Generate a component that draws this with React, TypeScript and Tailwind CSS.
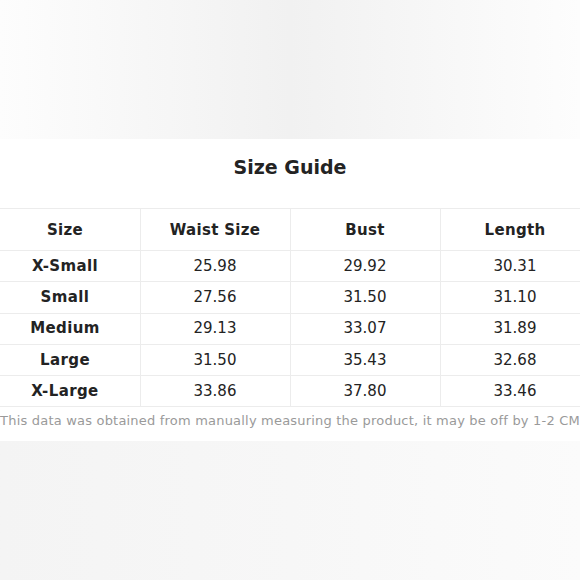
import React from "react"

const rows = [
  ["X-Small", "25.98", "29.92", "30.31"],
  ["Small", "27.56", "31.50", "31.10"],
  ["Medium", "29.13", "33.07", "31.89"],
  ["Large", "31.50", "35.43", "32.68"],
  ["X-Large", "33.86", "37.80", "33.46"],
]

const headers = ["Size", "Waist Size", "Bust", "Length"]

const App = () => {
  return (
    <div className="w-[580px] h-[580px] overflow-hidden flex flex-col font-['DejaVu_Sans',sans-serif] text-[#232323]">
      <div className="h-[139px] bg-linear-to-r from-[#fdfdfd] via-[#f1f1f1] to-[#fdfdfd]"></div>
      <div className="h-[302px] bg-white flex flex-col items-center">
        <h1 className="pt-4 text-[19px] leading-6 font-bold">Size Guide</h1>
        <table className="mt-[29px] w-[600px] shrink-0 border-collapse table-fixed text-[15px]">
          <thead>
            <tr className="h-[42px]">
              {headers.map((h) => (
                <th key={h} className="w-[150px] border border-[#ececec] font-bold text-center pt-[2px] tracking-[0.3px]">
                  {h}
                </th>
              ))}
            </tr>
          </thead>
          <tbody>
            {rows.map((row) => (
              <tr key={row[0]} className="h-[31.3px]">
                {row.map((cell, i) => (
                  <td
                    key={i}
                    className={`border border-[#ececec] text-center p-0 ${
                      i === 0 ? "font-bold tracking-[0.4px]" : "font-normal"
                    }`}
                  >
                    {cell}
                  </td>
                ))}
              </tr>
            ))}
          </tbody>
        </table>
        <p className="mt-[4px] whitespace-nowrap text-[13px] leading-5 tracking-[0.2px] text-[#9a9a9a]">
          This data was obtained from manually measuring the product, it may be off by 1-2 CM
        </p>
      </div>
      <div className="flex-1 bg-linear-to-r from-[#f4f4f4] via-[#f7f7f7] to-[#fbfbfb]"></div>
    </div>
  )
}

export default App
